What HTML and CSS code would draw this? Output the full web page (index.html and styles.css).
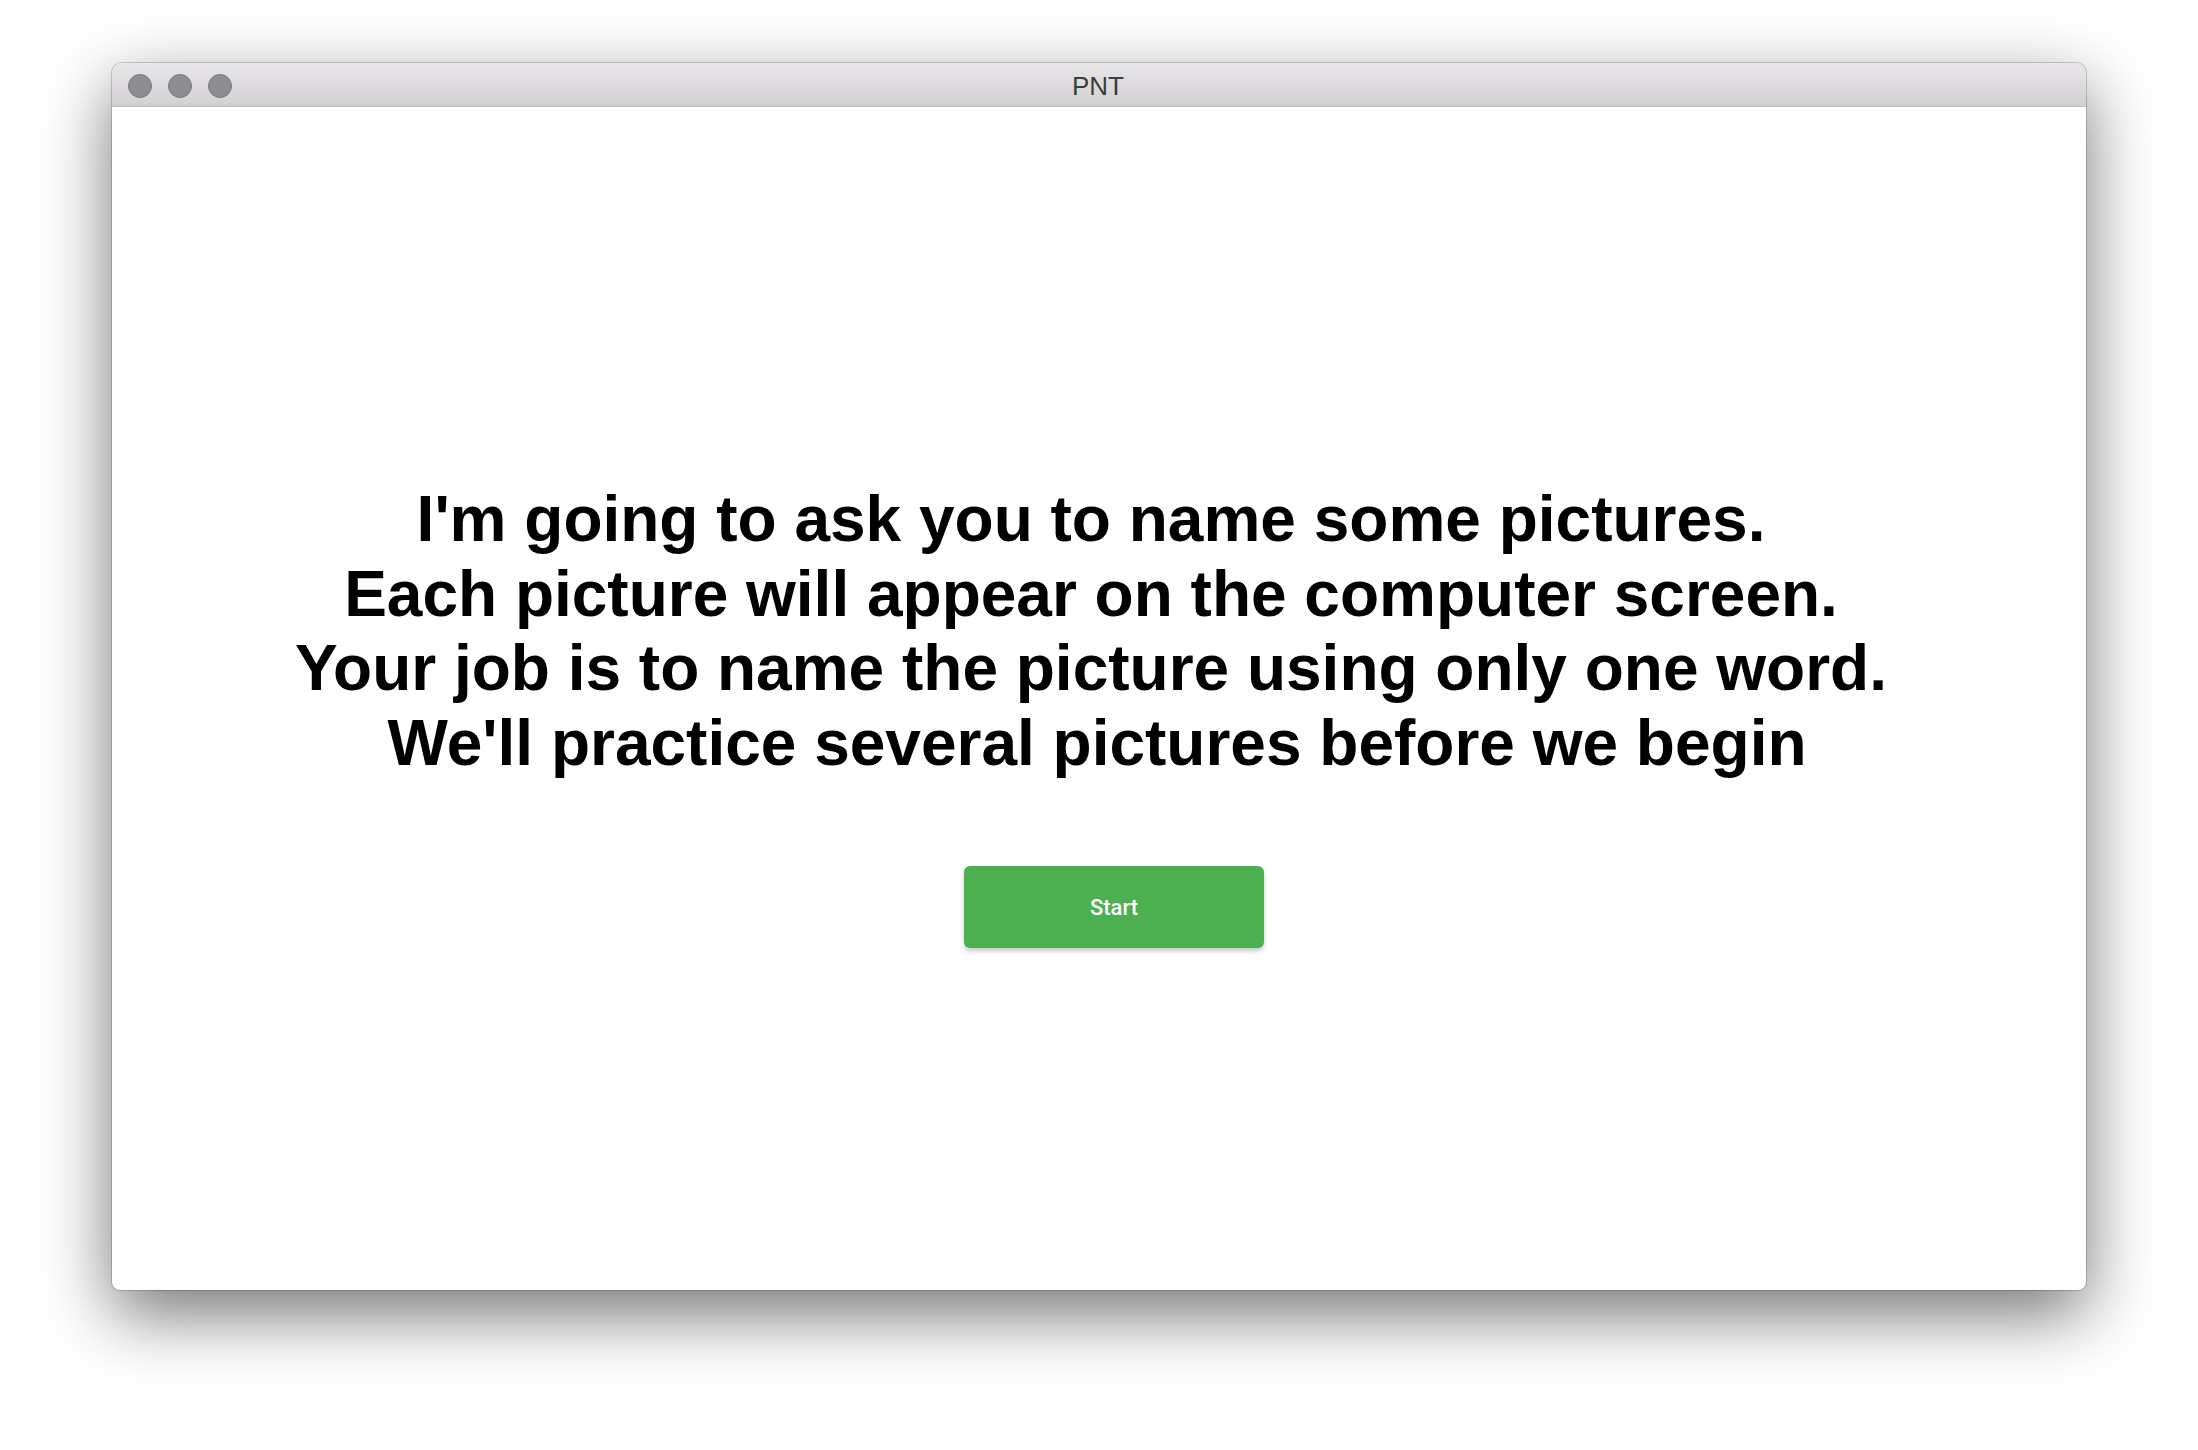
FILE: index.html
```html
<!DOCTYPE html>
<html lang="en">
<head>
<meta charset="utf-8">
<title>PNT</title>
<link rel="stylesheet" href="styles.css">
</head>
<body>
<div class="window">
  <div class="titlebar">
    <div class="lights">
      <span class="light"></span>
      <span class="light"></span>
      <span class="light"></span>
    </div>
    <div class="title">PNT</div>
  </div>
  <div class="content">
    <div class="instructions">
      <div class="line">I'm going to ask you to name some pictures.</div>
      <div class="line">Each picture will appear on the computer screen.</div>
      <div class="line">Your job is to name the picture using only one word.</div>
      <div class="line last">We'll practice several pictures before we begin</div>
    </div>
    <button class="start">Start</button>
  </div>
</div>
</body>
</html>
```

FILE: styles.css
```css
html, body {
  margin: 0;
  padding: 0;
  background: #ffffff;
}
body {
  width: 2198px;
  height: 1450px;
  padding: 63px 112px 0 112px;
  box-sizing: border-box;
  overflow: hidden;
}
.window {
  width: 1974px;
  height: 1227px;
  border-radius: 10px 10px 8px 8px;
  background: #ffffff;
  box-shadow: 0 0 0 1px rgba(0, 0, 0, 0.18), 0 24px 70px rgba(0, 0, 0, 0.55);
  display: flex;
  flex-direction: column;
  overflow: hidden;
}
.titlebar {
  height: 43px;
  flex: none;
  background: linear-gradient(#e9e7e9, #d2d0d2);
  border-bottom: 1px solid #b9b7b9;
  position: relative;
  display: flex;
  align-items: center;
  justify-content: center;
}
.lights {
  position: absolute;
  left: 16px;
  top: 11px;
  display: flex;
  gap: 16px;
}
.light {
  width: 22px;
  height: 22px;
  border-radius: 50%;
  background: #8e8d90;
  border: 1px solid #79787b;
}
.title {
  font-family: "Liberation Sans", Arial, sans-serif;
  font-size: 26px;
  color: #3d3d3d;
  margin-left: -2px;
  margin-top: 4px;
}
.content {
  flex: 1;
  display: flex;
  flex-direction: column;
  align-items: center;
  padding-top: 375px;
}
.instructions {
  font-family: "Liberation Sans", Arial, sans-serif;
  font-weight: bold;
  font-size: 64px;
  line-height: 74.5px;
  color: #000000;
  text-align: center;
  margin-right: 16px;
}
.line.last {
  padding-left: 12px;
}
.start {
  margin-top: 86px;
  margin-left: 30px;
  width: 300px;
  height: 82px;
  border: none;
  border-radius: 6px;
  background: #4caf50;
  color: #ffffff;
  font-family: Roboto, "Liberation Sans", sans-serif;
  font-weight: 500;
  font-size: 22px;
  box-shadow: 0 3px 5px rgba(0, 0, 0, 0.22);
}
```
